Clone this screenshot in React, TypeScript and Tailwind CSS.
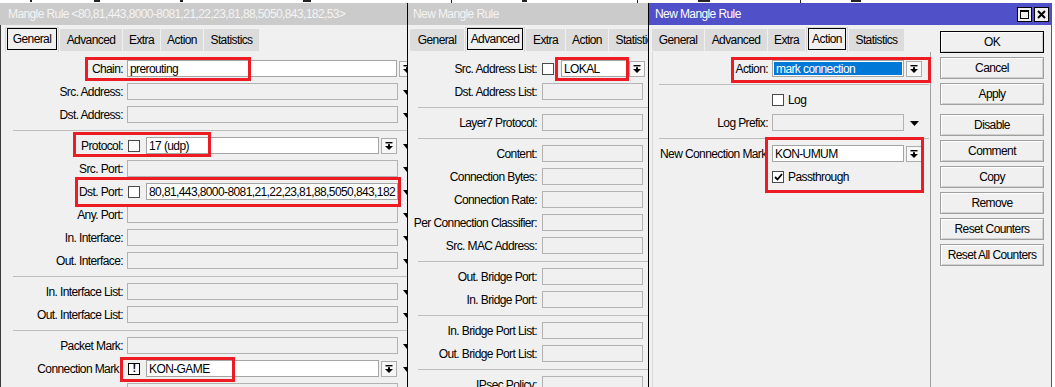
import clsx from 'clsx';
import type { ReactNode } from 'react';

const TAB_LABELS = ['General', 'Advanced', 'Extra', 'Action', 'Statistics'];

function DropArrow() {
    return (
        <svg width="8" height="8" viewBox="0 0 8 8" aria-hidden>
            <rect x="0.5" y="0" width="7" height="1.4" fill="#000" />
            <rect x="3" y="2.2" width="2" height="2" fill="#000" />
            <polygon points="0,4 8,4 4,8" fill="#000" />
        </svg>
    );
}

function DropButton() {
    return (
        <span className="ml-[2px] flex h-[16px] w-[16px] shrink-0 items-center justify-center border border-[#adadad] bg-[#f7f7f7]">
            <DropArrow />
        </span>
    );
}

function Marker({ className }: { className?: string }) {
    return (
        <svg className={clsx('shrink-0', className)} width="8" height="5" viewBox="0 0 8 5" aria-hidden>
            <polygon points="0,0 8,0 4,5" fill="#000" />
        </svg>
    );
}

function Field({ className, value, white }: { className: string; value?: string; white?: boolean }) {
    return (
        <div
            className={clsx(
                'flex h-[17px] shrink-0 items-center overflow-hidden whitespace-nowrap border pl-[2px]',
                white ? 'border-[#a5a5a5] bg-white' : 'border-[#b2b2b2] bg-[#f0f0f0]',
                className,
            )}
        >
            {value}
        </div>
    );
}

function Check({ checked, bang }: { checked?: boolean; bang?: boolean }) {
    return (
        <span
            className={clsx(
                'flex h-[12px] w-[12px] shrink-0 items-center justify-center border bg-white',
                bang ? 'border-black' : 'border-[#4a4a4a]',
            )}
        >
            {checked && (
                <svg width="9" height="8" viewBox="0 0 9 8" aria-hidden>
                    <polyline points="1,4 3.5,6.5 8,1" fill="none" stroke="#000" strokeWidth="1.8" />
                </svg>
            )}
            {bang && <span className="text-[11px] font-bold leading-none">!</span>}
        </span>
    );
}

function Tabs({ active, widths, className }: { active: number; widths: string[]; className: string }) {
    return (
        <div className={clsx('flex h-[27px] shrink-0 items-end gap-px', className)}>
            {TAB_LABELS.map((label, i) =>
                i === active ? (
                    <div key={label} className={clsx('h-[25px] shrink-0 border-x border-t border-[#d6d6d6] bg-[#f0f0f0] px-px', widths[i])}>
                        <div className="flex h-[22px] items-center justify-center whitespace-nowrap border border-black">{label}</div>
                    </div>
                ) : (
                    <div key={label} className={clsx('mb-px flex h-[22px] shrink-0 items-center justify-center whitespace-nowrap bg-[#dcdcdc]', widths[i])}>
                        {label}
                    </div>
                ),
            )}
        </div>
    );
}

function TitleBar({ title, active, className }: { title: string; active?: boolean; className: string }) {
    return (
        <div
            className={clsx(
                'flex h-[22px] shrink-0 items-center whitespace-nowrap',
                active ? 'bg-[#5050c8] text-white' : 'bg-[#cbcbcb] text-[#f4f4f4]',
                className,
            )}
        >
            <span className="flex-1">{title}</span>
            {active && (
                <div className="flex gap-[2px] pr-[2px]">
                    <span className="flex h-[15px] w-[15px] items-center justify-center border border-black bg-[#f0f0f0]">
                        <span className="h-[9px] w-[9px] border border-t-2 border-black" />
                    </span>
                    <span className="flex h-[15px] w-[15px] items-center justify-center border border-black bg-[#f0f0f0]">
                        <svg width="9" height="9" viewBox="0 0 9 9" aria-hidden>
                            <path d="M1 1 L8 8 M8 1 L1 8" stroke="#000" strokeWidth="2" />
                        </svg>
                    </span>
                </div>
            )}
        </div>
    );
}

function Sep({ className }: { className: string }) {
    return (
        <div className="flex h-[8px] items-center">
            <div className={clsx('h-px flex-1 bg-[#bdbdbd]', className)} />
        </div>
    );
}

// Mangle Rule (left window)
function LeftRow({ label, children, marker = true, labelClass }: { label: string; children?: ReactNode; marker?: boolean; labelClass?: string }) {
    return (
        <div className="flex h-[23px] items-center">
            <div className={clsx('w-[122px] shrink-0 whitespace-nowrap text-right', labelClass)}>{label}</div>
            <div className="ml-[4px] flex w-[271px] shrink-0 items-center">
                {children ?? <Field className="w-[271px]" />}
            </div>
            {marker && <Marker className="ml-[5px] mt-[2px]" />}
        </div>
    );
}

function MangleRuleWindow() {
    return (
        <div className="flex w-[407px] shrink-0 flex-col overflow-hidden">
            <TitleBar title="Mangle Rule <80,81,443,8000-8081,21,22,23,81,88,5050,843,182,53>" className="pl-[8px]" />
            <div className="flex flex-1 flex-col border-l border-[#3a3a3a] bg-[#f0f0f0]">
                <Tabs active={0} widths={['w-[54px]', 'w-[62px]', 'w-[37px]', 'w-[42px]', 'w-[55px]']} className="pl-[4px]" />
                <div className="pt-[5px]">
                    <LeftRow label="Chain:" marker={false}>
                        <Field white className="w-[270px]" value="prerouting" />
                        <DropButton />
                    </LeftRow>
                    <LeftRow label="Src. Address:" />
                    <LeftRow label="Dst. Address:" />
                    <Sep className="ml-[12px]" />
                    <LeftRow label="Protocol:">
                        <span className="ml-px" />
                        <Check />
                        <Field white className="ml-[6px] w-[233px]" value="17 (udp)" />
                        <DropButton />
                    </LeftRow>
                    <LeftRow label="Src. Port:" />
                    <LeftRow label="Dst. Port:">
                        <span className="ml-px" />
                        <Check />
                        <Field white className="ml-[6px] w-[252px]" value="80,81,443,8000-8081,21,22,23,81,88,5050,843,182" />
                    </LeftRow>
                    <LeftRow label="Any. Port:" />
                    <LeftRow label="In. Interface:" />
                    <LeftRow label="Out. Interface:" />
                    <Sep className="ml-[12px]" />
                    <LeftRow label="In. Interface List:" />
                    <LeftRow label="Out. Interface List:" />
                    <Sep className="ml-[12px]" />
                    <LeftRow label="Packet Mark:" />
                    <LeftRow label="Connection Mark" labelClass="pr-[4px]">
                        <span className="ml-px" />
                        <Check bang />
                        <Field white className="ml-[6px] w-[233px]" value="KON-GAME" />
                        <DropButton />
                    </LeftRow>
                    <LeftRow label="Routing Mark:" />
                </div>
            </div>
        </div>
    );
}

// New Mangle Rule, Advanced tab (middle window)
function MidRow({ label, children }: { label: string; children?: ReactNode }) {
    return (
        <div className="flex h-[23px] items-center">
            <div className="w-[129px] shrink-0 whitespace-nowrap text-right">{label}</div>
            <div className="ml-[5px] flex w-[101px] shrink-0 items-center">
                {children ?? <Field className="w-[101px]" />}
            </div>
        </div>
    );
}

function AdvancedWindow() {
    return (
        <div className="flex w-[241px] shrink-0 flex-col overflow-hidden border-l border-black bg-[#f0f0f0]">
            <TitleBar title="New Mangle Rule" className="pl-[5px]" />
            <Tabs active={1} widths={['w-[54px]', 'w-[60px]', 'w-[39px]', 'w-[42px]', 'w-[55px]']} className="pl-[2px]" />
            <div className="pt-[5px]">
                <MidRow label="Src. Address List:">
                    <Check />
                    <Field white className="ml-[7px] w-[66px]" value="LOKAL" />
                    <DropButton />
                </MidRow>
                <MidRow label="Dst. Address List:" />
                <Sep className="ml-[10px]" />
                <MidRow label="Layer7 Protocol:" />
                <Sep className="ml-[10px]" />
                <MidRow label="Content:" />
                <MidRow label="Connection Bytes:" />
                <MidRow label="Connection Rate:" />
                <MidRow label="Per Connection Classifier:" />
                <MidRow label="Src. MAC Address:" />
                <Sep className="ml-[10px]" />
                <MidRow label="Out. Bridge Port:" />
                <MidRow label="In. Bridge Port:" />
                <Sep className="ml-[10px]" />
                <MidRow label="In. Bridge Port List:" />
                <MidRow label="Out. Bridge Port List:" />
                <Sep className="ml-[10px]" />
                <MidRow label="IPsec Policy:" />
            </div>
        </div>
    );
}

// New Mangle Rule, Action tab (active window)
function ActionRow({ label, children, left }: { label?: string; children: ReactNode; left?: boolean }) {
    return (
        <div className="flex h-[23px] items-center">
            <div className={clsx('w-[115px] shrink-0 whitespace-nowrap', left ? 'pl-[7px] text-left' : 'text-right')}>{label}</div>
            <div className="ml-[4px] flex shrink-0 items-center">{children}</div>
        </div>
    );
}

const sideButtons = [
    { label: 'OK', cls: 'border-black' },
    { label: 'Cancel', cls: 'mt-[4px]' },
    { label: 'Apply', cls: 'mt-[4px]' },
    { label: 'Disable', cls: 'mt-[9px]' },
    { label: 'Comment', cls: 'mt-[4px]' },
    { label: 'Copy', cls: 'mt-[4px]' },
    { label: 'Remove', cls: 'mt-[4px]' },
    { label: 'Reset Counters', cls: 'mt-[4px]' },
    { label: 'Reset All Counters', cls: 'mt-[4px]' },
];

function ActionWindow() {
    return (
        <div className="flex w-[404px] shrink-0 flex-col overflow-hidden border-x border-l-black border-r-[#5a5a5a] bg-[#f0f0f0]">
            <TitleBar title="New Mangle Rule" active className="pl-[6px]" />
            <div className="flex flex-1">
                <div className="flex flex-col pl-[3px]">
                    <Tabs active={3} widths={['w-[52px]', 'w-[62px]', 'w-[37px]', 'w-[42px]', 'w-[55px]']} className="" />
                    <div className="w-[279px] flex-1 border-x border-l-[#dadada] border-r-[#a0a0a0] pt-[5px]">
                        <ActionRow label="Action:">
                            <div className="flex h-[17px] w-[132px] border border-[#a5a5a5] bg-white p-px">
                                <div className="flex flex-1 items-center whitespace-nowrap bg-[#0078d7] pl-[2px] text-white">mark connection</div>
                            </div>
                            <DropButton />
                        </ActionRow>
                        <Sep className="ml-[6px] mr-px" />
                        <ActionRow>
                            <Check />
                            <span className="ml-[4px]">Log</span>
                        </ActionRow>
                        <ActionRow label="Log Prefix:">
                            <Field className="w-[132px]" />
                            <svg className="ml-[6px] mt-px" width="9" height="5" viewBox="0 0 9 5" aria-hidden>
                                <polygon points="0,0 9,0 4.5,5" fill="#000" />
                            </svg>
                        </ActionRow>
                        <Sep className="ml-[6px] mr-px" />
                        <ActionRow label="New Connection Mark" left>
                            <Field white className="w-[132px]" value="KON-UMUM" />
                            <DropButton />
                        </ActionRow>
                        <ActionRow>
                            <Check checked />
                            <span className="ml-[4px]">Passthrough</span>
                        </ActionRow>
                    </div>
                </div>
                <div className="ml-[9px] flex flex-col pt-[6px]">
                    {sideButtons.map((b) => (
                        <div
                            key={b.label}
                            className={clsx(
                                'flex h-[22px] w-[104px] items-center justify-center whitespace-nowrap border border-[#a0a0a0] bg-[#f0f0f0] shadow-[inset_1px_1px_0_#ffffff,inset_-1px_-1px_0_#d0d0d0]',
                                b.cls,
                            )}
                        >
                            {b.label}
                        </div>
                    ))}
                </div>
            </div>
        </div>
    );
}

export default function App() {
    const redBox = 'pointer-events-none absolute border-[3px] border-[#ed1c24]';
    return (
        <div className="relative flex h-[387px] w-[1055px] flex-col overflow-hidden bg-white font-['Liberation_Sans',Arial,sans-serif] text-[12px] tracking-[-0.6px] text-black">
            <div className="flex h-[3px] shrink-0 items-start bg-white">
                <span className="ml-[30px] h-[2px] w-[2px] bg-[#222]" />
                <span className="ml-[62px] h-[2px] w-[6px] bg-[#222]" />
                <span className="ml-[80px] h-[2px] w-[3px] bg-[#222]" />
                <span className="ml-[120px] h-[2px] w-[8px] bg-[#222]" />
                <span className="ml-[140px] h-[3px] w-px bg-[#222]" />
                <span className="ml-[70px] h-[2px] w-[5px] bg-[#222]" />
                <span className="ml-[110px] h-[3px] w-px bg-[#222]" />
                <span className="ml-[60px] h-[2px] w-[12px] bg-[#222]" />
                <span className="ml-[90px] h-[3px] w-px bg-[#222]" />
                <span className="ml-[50px] h-[2px] w-[10px] bg-[#222]" />
            </div>
            <div className="flex h-[384px]">
                <MangleRuleWindow />
                <AdvancedWindow />
                <ActionWindow />
                <div className="w-[3px] shrink-0 bg-white" />
            </div>

            <div className={clsx(redBox, 'left-[85px] top-[57px] h-[24px] w-[166px]')} />
            <div className={clsx(redBox, 'left-[73px] top-[132px] h-[25px] w-[138px]')} />
            <div className={clsx(redBox, 'left-[75px] top-[177px] h-[30px] w-[326px]')} />
            <div className={clsx(redBox, 'left-[120px] top-[357px] h-[25px] w-[115px]')} />
            <div className={clsx(redBox, 'left-[555px] top-[57px] h-[24px] w-[74px]')} />
            <div className={clsx(redBox, 'left-[731px] top-[57px] h-[26px] w-[200px]')} />
            <div className={clsx(redBox, 'left-[765px] top-[137px] h-[56px] w-[159px]')} />
        </div>
    );
}
